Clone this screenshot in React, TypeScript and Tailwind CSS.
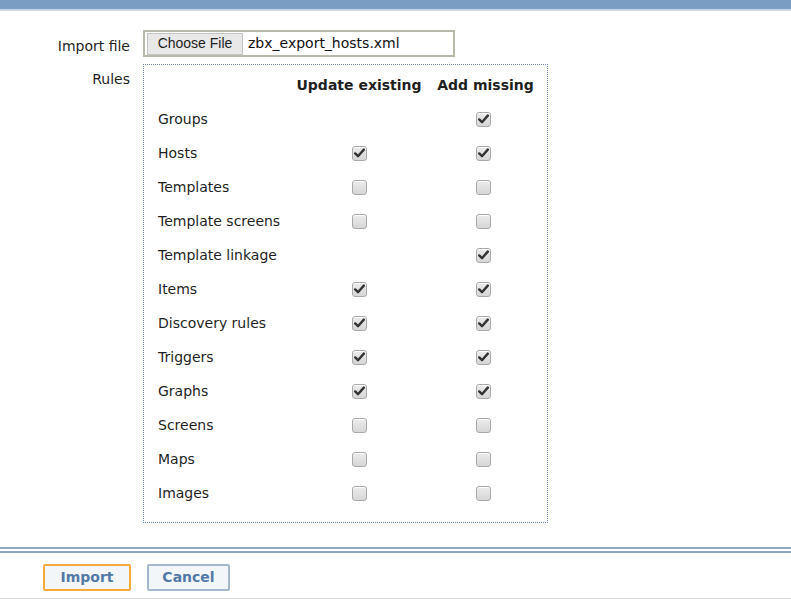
import React from "react";

interface RuleRow {
  name: string;
  update: boolean | null;
  add: boolean;
}

const rules: RuleRow[] = [
  { name: "Groups", update: null, add: true },
  { name: "Hosts", update: true, add: true },
  { name: "Templates", update: false, add: false },
  { name: "Template screens", update: false, add: false },
  { name: "Template linkage", update: null, add: true },
  { name: "Items", update: true, add: true },
  { name: "Discovery rules", update: true, add: true },
  { name: "Triggers", update: true, add: true },
  { name: "Graphs", update: true, add: true },
  { name: "Screens", update: false, add: false },
  { name: "Maps", update: false, add: false },
  { name: "Images", update: false, add: false },
];

const Check: React.FC<{ on: boolean }> = ({ on }) => (
  <span className="inline-flex h-[15px] w-[15px] items-center justify-center rounded-[3px] border border-[#a9a9a9] bg-gradient-to-b from-[#ececec] to-[#d6d6d6] shadow-[inset_0_1px_0_#fff]">
    {on && (
      <svg width="11" height="10" viewBox="0 0 11 10">
        <path d="M1.2 5.4 L4 8.2 L9.8 1.6" fill="none" stroke="#333" strokeWidth="2.4" strokeLinecap="round" strokeLinejoin="round" />
      </svg>
    )}
  </span>
);

const App: React.FC = () => {
  return (
    <div className="min-h-[600px] bg-white font-['DejaVu_Sans',sans-serif] text-[14px] text-[#1f1f1f]">
      <div className="h-[9px] bg-[#7a9ec3]" />
      <div className="h-[2px] bg-[#c9d7e5]" />

      <div className="mt-[19px] grid grid-cols-[130px_auto] gap-x-[13px] gap-y-[8px]">
        <div className="pt-[6px] text-right">Import file</div>
        <div className="flex h-[27px] w-[312px] items-center border-2 border-[#b9b9aa] pl-[2px]">
          <span className="flex h-[22px] w-[96px] items-center justify-center border border-[#c4c4c4] bg-[#e8e8e8] font-['Liberation_Sans',sans-serif] text-[14px] text-[#222]">
            Choose File
          </span>
          <span className="ml-[5px] text-[#111]">zbx_export_hosts.xml</span>
        </div>

        <div className="pt-[4px] text-right">Rules</div>
        <div className="-mt-[1px] w-[405px] border border-dotted border-[#6f88c6] pb-[12px] pl-[14px] pr-[4px] pt-[3px]">
          <div className="grid grid-cols-[132px_138px_115px] items-center">
            <div className="h-[34px]" />
            <div className="flex h-[34px] items-center justify-center font-bold">Update existing</div>
            <div className="flex h-[34px] items-center justify-center font-bold">Add missing</div>
            {rules.map((r) => (
              <React.Fragment key={r.name}>
                <div className="flex h-[34px] items-center">{r.name}</div>
                <div className="flex h-[34px] items-center justify-center">
                  {r.update !== null && <Check on={r.update} />}
                </div>
                <div className="flex h-[34px] items-center justify-center pr-[4px]">
                  <Check on={r.add} />
                </div>
              </React.Fragment>
            ))}
          </div>
        </div>
      </div>

      <div className="mt-[24px] h-[2px] bg-[#8fa7c2]" />
      <div className="mt-[2px] h-[2px] bg-[#8fa7c2]" />

      <div className="flex gap-[16px] pl-[43px] pt-[11px]">
        <button className="h-[27px] w-[88px] rounded-[2px] border-2 border-[#f6a93e] bg-[#f3f6f9] font-bold text-[#5279a6]">
          Import
        </button>
        <button className="h-[27px] w-[83px] rounded-[2px] border-2 border-[#a4b7cd] bg-[#f3f6f9] font-bold text-[#5279a6]">
          Cancel
        </button>
      </div>
      <div className="mt-[7px] h-[1px] bg-[#d4d4d4]" />
    </div>
  );
};

export default App;
